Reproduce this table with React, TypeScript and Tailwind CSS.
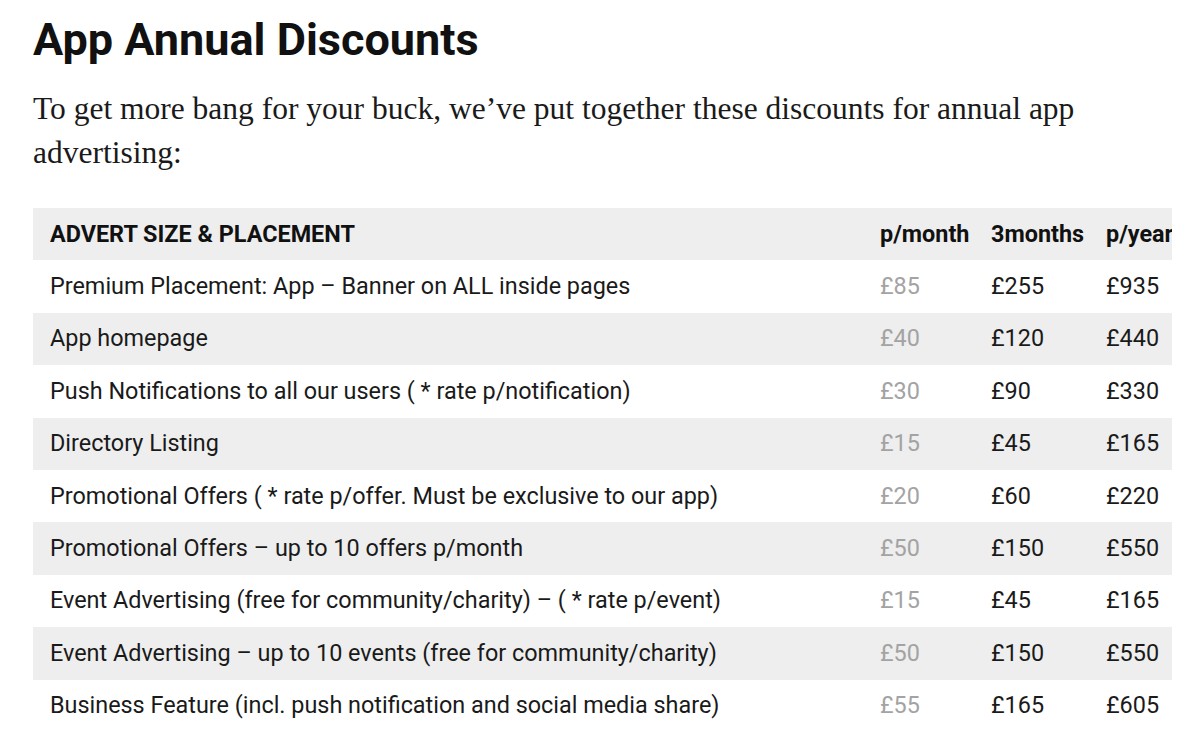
const rows = [
  ['Premium Placement: App – Banner on ALL inside pages', '£85', '£255', '£935'],
  ['App homepage', '£40', '£120', '£440'],
  ['Push Notifications to all our users ( * rate p/notification)', '£30', '£90', '£330'],
  ['Directory Listing', '£15', '£45', '£165'],
  ['Promotional Offers ( * rate p/offer. Must be exclusive to our app)', '£20', '£60', '£220'],
  ['Promotional Offers – up to 10 offers p/month', '£50', '£150', '£550'],
  ['Event Advertising (free for community/charity) – ( * rate p/event)', '£15', '£45', '£165'],
  ['Event Advertising – up to 10 events (free for community/charity)', '£50', '£150', '£550'],
  ['Business Feature (incl. push notification and social media share)', '£55', '£165', '£605'],
]

export default function App() {
  return (
    <div className="min-h-screen bg-white px-[33px] pt-[14px] text-[#111]">
      <h1 className="font-['Roboto',sans-serif] text-[45px] font-bold leading-[52px]">
        App Annual Discounts
      </h1>
      <p className="mt-[21px] w-[1100px] font-['Liberation_Serif',serif] text-[31.5px] leading-[44px] text-[#1a1a1a]">
        To get more bang for your buck, we’ve put together these discounts for annual app advertising:
      </p>

      {/* Table */}
      <div className="mt-[33px] w-[1139px] overflow-hidden font-['Roboto',sans-serif] text-[23.4px]">
        <div className="w-[1240px]">
          <div className="flex h-[52.4px] items-center bg-[#eeeeee] font-bold">
            <div className="w-[830px] pl-[17px]">ADVERT SIZE &amp; PLACEMENT</div>
            <div className="w-[111px] pl-[17px]">p/month</div>
            <div className="w-[115px] pl-[17px]">3months</div>
            <div className="pl-[17px]">p/year</div>
          </div>
          {rows.map((r, i) => (
            <div
              key={i}
              className={`flex h-[52.4px] items-center ${i % 2 === 1 ? 'bg-[#eeeeee]' : 'bg-white'}`}
            >
              <div className="w-[830px] pl-[17px] text-[#1a1a1a]">{r[0]}</div>
              <div className="w-[111px] pl-[17px] text-[#a3a3a3]">{r[1]}</div>
              <div className="w-[115px] pl-[17px] text-[#1a1a1a]">{r[2]}</div>
              <div className="pl-[17px] text-[#1a1a1a]">{r[3]}</div>
            </div>
          ))}
        </div>
      </div>
    </div>
  )
}
